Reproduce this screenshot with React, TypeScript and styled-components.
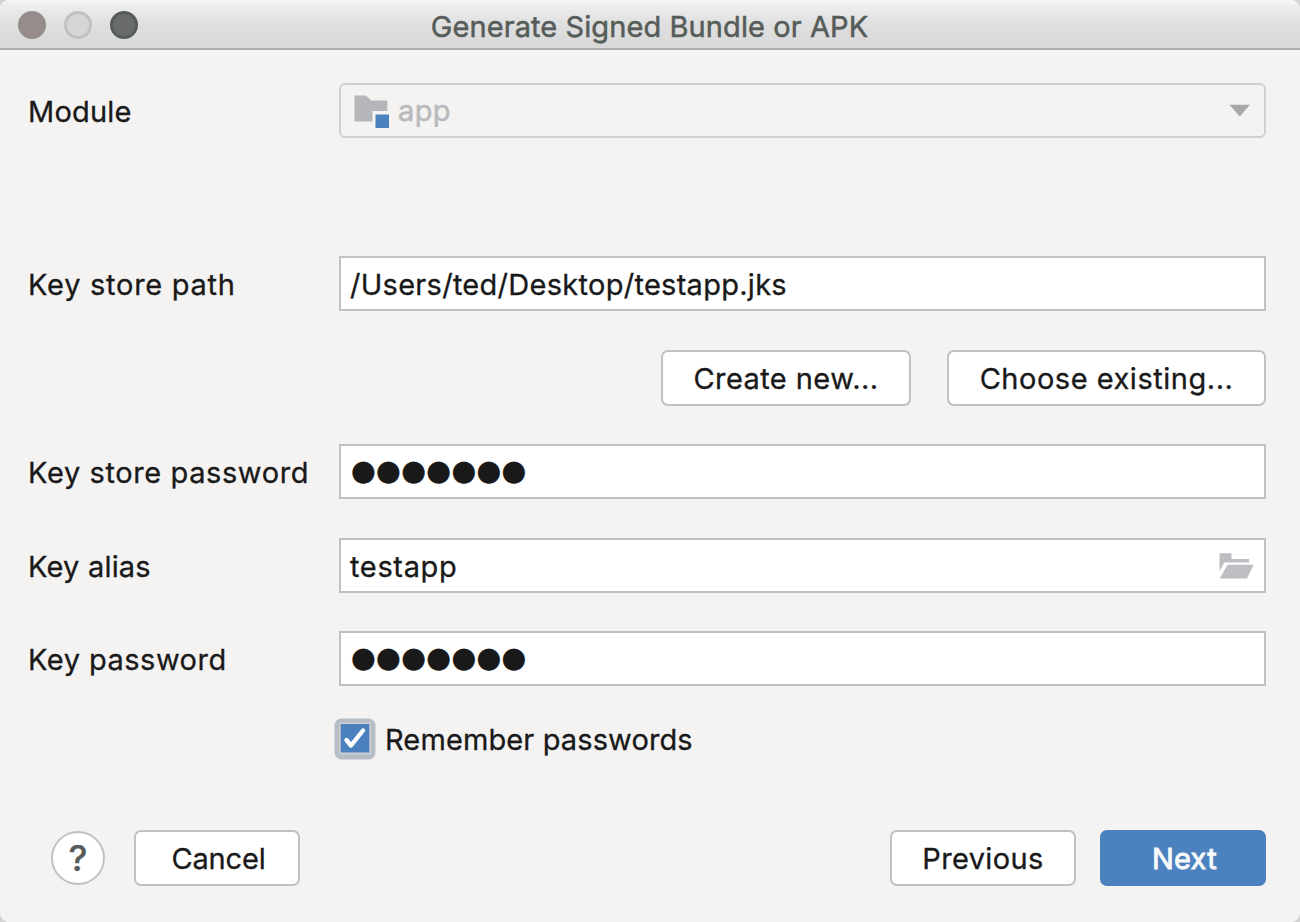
import React, { useState } from "react";
import styled, { createGlobalStyle } from "styled-components";

const GlobalStyle = createGlobalStyle`
  *, *::before, *::after { box-sizing: border-box; }
  body { margin: 0; background: #d2d3d4; overflow: hidden; }
`;

const colors = {
  ink: "#191919",
  title: "#565c59",
  line: "#bfc1c4",
  panel: "#f4f3f2",
  accent: "#4b81bf",
};

const Dialog = styled.div`
  display: flex;
  flex-direction: column;
  width: 1300px;
  height: 922px;
  background: ${colors.panel};
  border-radius: 9px;
  overflow: hidden;
  color: ${colors.ink};
  font-family: Inter, "Liberation Sans", sans-serif;
  font-size: 29px;
  line-height: 36px;
  -webkit-text-stroke: 0.3px currentColor;
`;

const TitleBar = styled.header`
  display: grid;
  grid-template-columns: 200px 1fr 200px;
  align-items: center;
  height: 50px;
  background: linear-gradient(#f6f5f4 0, #ececec 8px, #dfdfdf 24px, #d9d9d9 47px);
  border-bottom: 2px solid #adaeb0;
`;

const Lights = styled.div`
  display: flex;
  gap: 18px;
  padding: 2px 0 0 18px;
`;

const Light = styled.span<{ $fill: string; $ring: string }>`
  width: 28px;
  height: 28px;
  border-radius: 50%;
  background: ${(p) => p.$fill};
  border: 3px solid ${(p) => p.$ring};
`;

const Title = styled.h1`
  margin: 0;
  padding: 5px 1px 0 0;
  font: inherit;
  letter-spacing: 0.09px;
  color: ${colors.title};
  -webkit-text-stroke: 0.5px ${colors.title};
  text-align: center;
  white-space: nowrap;
`;

const Form = styled.main`
  display: flex;
  flex-direction: column;
  padding: 33px 34px 0 28px;
`;

const Row = styled.div<{ $after: number }>`
  display: grid;
  grid-template-columns: 311px 1fr;
  align-items: center;
  height: 55px;
  margin-bottom: ${(p) => p.$after}px;
`;

const Label = styled.label<{ $track: number }>`
  padding-top: 2px;
  letter-spacing: ${(p) => p.$track}px;
  white-space: nowrap;
`;

const Field = styled.div`
  display: flex;
  align-items: center;
  justify-content: space-between;
  height: 55px;
  padding: 0 10px 0 9px;
  background: #fff;
  border: 2px solid ${colors.line};
`;

const Select = styled(Field)`
  background: transparent;
  border: 2px solid #cfd0d1;
  border-radius: 6px;
  padding: 0 13px;
`;

const Choice = styled.span`
  display: flex;
  align-items: center;
  gap: 8px;
  color: #b9babc;
  letter-spacing: 0.4px;
  -webkit-text-stroke: 0.6px #b9babc;
`;

const Value = styled.span<{ $track: number }>`
  padding-top: 2px;
  letter-spacing: ${(p) => p.$track}px;
`;

const Mask = styled.span`
  padding: 0 0 2px 1px;
  font-family: "DejaVu Sans", sans-serif;
  font-size: 28.5px;
  letter-spacing: 0.23px;
`;

const KeyStoreActions = styled.div`
  display: flex;
  justify-content: flex-end;
  gap: 36px;
  margin-bottom: 38px;
`;

const Button = styled.button<{ $width: number; $track: number; $primary?: boolean }>`
  width: ${(p) => p.$width}px;
  height: 56px;
  padding: 2px 0 0 ${(p) => (p.$width > 170 ? 0 : 3)}px;
  font: inherit;
  letter-spacing: ${(p) => p.$track}px;
  color: ${(p) => (p.$primary ? "#f8f8f8" : colors.ink)};
  -webkit-text-stroke: ${(p) => (p.$primary ? "0.9px #f8f8f8" : "0.3px currentColor")};
  background: ${(p) => (p.$primary ? colors.accent : "#fff")};
  border: 2px solid ${(p) => (p.$primary ? colors.accent : colors.line)};
  border-radius: 7px;
`;

const Remember = styled.label`
  display: flex;
  align-items: center;
  gap: 9px;
  height: 42px;
  margin: 0 0 70px 306px;
  letter-spacing: 0.12px;
`;

const RememberText = styled.span`
  padding-top: 2px;
`;

const Footer = styled.footer`
  display: flex;
  align-items: center;
  gap: 24px;
  padding: 0 34px 0 51px;
`;

const Spacer = styled.span`
  flex: 1;
`;

const HelpButton = styled.button`
  width: 54px;
  height: 54px;
  margin-right: 5px;
  padding: 0;
  font: 500 36px/48px Inter, sans-serif;
  color: ${colors.title};
  background: #fff;
  border: 2px solid ${colors.line};
  border-radius: 50%;
`;

const ModuleIcon = () => (
  <svg width="36" height="34" viewBox="0 0 36 34">
    <path d="M.5 1.5H12L17 6.5H33.3V17H18.5V27.5H.5Z" fill="#b4b6b9" />
    <path d="M21.5 20.5H35V34H21.5Z" fill={colors.accent} />
  </svg>
);

const Arrow = () => (
  <svg width="22" height="13" viewBox="0 0 22 13">
    <path d="M.5 .7H21L10.7 12.6Z" fill="#a9a8a9" />
  </svg>
);

const OpenFolder = () => (
  <svg width="35" height="26" viewBox="0 0 35 26">
    <path d="M.5 .3H12.5V6H30V9.5H5.3L.5 18.5Z" fill="#bcbec1" />
    <path d="M8.6 11.8H34.6L28 25.5H.6Z" fill="#bcbec1" />
  </svg>
);

const CheckBox = ({ checked }: { checked: boolean }) => (
  <svg width="42" height="42" viewBox="0 0 42 42">
    <rect x=".5" y=".5" width="41" height="41" rx="7" fill="#b5bdc7" />
    <rect x="5" y="4.5" width="32" height="32" rx="2" fill="#cdcfd1" />
    <rect x="6.7" y="6" width="28.6" height="28.5" fill={colors.accent} />
    {checked && (
      <path
        d="M12.5 22L17 27.5L29 12.5"
        fill="none"
        stroke="#fff"
        strokeWidth="4.4"
        strokeLinecap="round"
        strokeLinejoin="round"
      />
    )}
  </svg>
);

export default function App() {
  const [remember, setRemember] = useState(true);
  return (
    <>
      <GlobalStyle />
      <Dialog>
        <TitleBar>
          <Lights>
            <Light $fill="#968c8c" $ring="#968c8c" />
            <Light $fill="#d5d5d5" $ring="#bfc1c3" />
            <Light $fill="#686b69" $ring="#565c59" />
          </Lights>
          <Title>Generate Signed Bundle or APK</Title>
        </TitleBar>
        <Form>
          <Row $after={118}>
            <Label $track={0.2}>Module</Label>
            <Select>
              <Choice>
                <ModuleIcon />
                app
              </Choice>
              <Arrow />
            </Select>
          </Row>
          <Row $after={39}>
            <Label $track={0.73}>Key store path</Label>
            <Field>
              <Value $track={0.28}>/Users/ted/Desktop/testapp.jks</Value>
            </Field>
          </Row>
          <KeyStoreActions>
            <Button $width={250} $track={0.43}>Create new...</Button>
            <Button $width={319} $track={0.52}>Choose existing...</Button>
          </KeyStoreActions>
          <Row $after={39}>
            <Label $track={0.6}>Key store password</Label>
            <Field>
              <Mask>●●●●●●●</Mask>
            </Field>
          </Row>
          <Row $after={38}>
            <Label $track={0.2}>Key alias</Label>
            <Field>
              <Value $track={0.65}>testapp</Value>
              <OpenFolder />
            </Field>
          </Row>
          <Row $after={32}>
            <Label $track={0.48}>Key password</Label>
            <Field>
              <Mask>●●●●●●●</Mask>
            </Field>
          </Row>
          <Remember onClick={() => setRemember(!remember)}>
            <CheckBox checked={remember} />
            <RememberText>Remember passwords</RememberText>
          </Remember>
        </Form>
        <Footer>
          <HelpButton>?</HelpButton>
          <Button $width={166} $track={-0.15}>Cancel</Button>
          <Spacer />
          <Button $width={186} $track={0.35}>Previous</Button>
          <Button $width={166} $track={0.3} $primary>Next</Button>
        </Footer>
      </Dialog>
    </>
  );
}
